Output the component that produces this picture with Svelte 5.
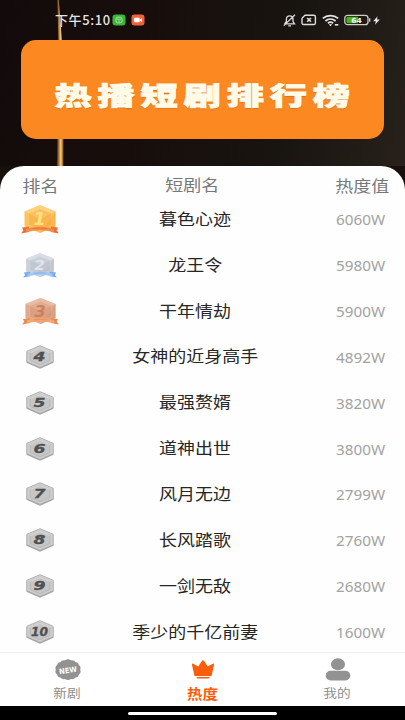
<script lang="ts">
	type Drama = { name: string; heat: string };

	const dramas: Drama[] = [
		{ name: '暮色心迹', heat: '6060W' },
		{ name: '龙王令', heat: '5980W' },
		{ name: '干年情劫', heat: '5900W' },
		{ name: '女神的近身高手', heat: '4892W' },
		{ name: '最强赘婿', heat: '3820W' },
		{ name: '道神出世', heat: '3800W' },
		{ name: '风月无边', heat: '2799W' },
		{ name: '长风踏歌', heat: '2760W' },
		{ name: '一剑无敌', heat: '2680W' },
		{ name: '季少的千亿前妻', heat: '1600W' }
	];

	const medals = [
		{ light: '#ffd98a', mid: '#fcc35c', dark: '#f3a236', ribbon: '#f58a4a', tail: '#ea6f35', text: '#ffe27a' },
		{ light: '#e0e2e8', mid: '#cbcfd8', dark: '#b2b8c6', ribbon: '#a3c8f3', tail: '#78a8e6', text: '#dfe4ee' },
		{ light: '#edc5ad', mid: '#e0a98b', dark: '#d39170', ribbon: '#f3a66e', tail: '#e58b50', text: '#cb8160' }
	];
</script>

<div class="phone">
	<header class="hero">
		<div class="streak"></div>
		<div class="status">
			<span class="time">下午5:10</span>
			<svg class="app-icon" width="14" height="12" viewBox="0 0 14 12">
				<rect x=".5" y=".5" width="13" height="11" rx="3" fill="#3fb43b" />
				<rect x="4" y="3.2" width="6" height="5.6" rx="1.8" fill="none" stroke="#a8e59a" />
				<path d="M5 5.2h4M6 7h2" stroke="#a8e59a" stroke-width=".8" />
			</svg>
			<svg class="rec-icon" width="14" height="12" viewBox="0 0 14 12">
				<rect x=".5" y=".5" width="13" height="11" rx="3" fill="#f1623b" />
				<rect x="3" y="3.8" width="5.7" height="4.5" rx="1" fill="#fff" />
				<path d="M8.8 5.7 11 4v4L8.8 6.5z" fill="#fff" />
			</svg>
			<div class="indicators">
				<svg width="13" height="13" viewBox="0 0 13 13" fill="none" stroke="#ddd" stroke-width="1.3">
					<path d="M1.5 9.8h10L10 7.6V5C10 3 8.7 1.8 6.7 1.8S3.4 3 3.4 5v2.5L1.5 9.8M5.3 11.8h2.8M.8 11.6 12 .8" />
				</svg>
				<svg width="16" height="12" viewBox="0 0 16 12" fill="none" stroke="#ddd" stroke-width="1.4">
					<path d="M4 1.3h8.8q1.6 0 1.6 1.6v6q0 1.6-1.6 1.6H2.6Q1 10.5 1 8.900V4.2z" />
					<path d="m6.2 4 3.8 3.8M10 4 6.2 7.8" stroke-width="1.6" />
				</svg>
				<svg width="17" height="13" viewBox="0 0 17 13" fill="none" stroke="#e4e4e4" stroke-width="1.7">
					<path d="M.8 4.4c4.200-3.700 11.200-3.700 15.400 0M3.400 7c3-2.500 7.200-2.500 10.200 0M5.900 9.200c1.600-1.200 3.600-1.200 5.200 0" />
					<path d="m6.900 10.400 1.600 1.800 1.600-1.800q-1.600-1-3.200 0z" fill="#e4e4e4" stroke="none" />
					<path d="M12.8 10.8h3.500" stroke-width="1.6" />
				</svg>
				<svg class="battery" width="27" height="12" viewBox="0 0 27 12">
					<rect x=".8" y="1.3" width="23.2" height="9.4" rx="2.8" fill="none" stroke="#ccc" stroke-width="1.3" />
					<path d="M4.200 2.700h9.800v6.600H4.200q-1.800 0-1.800-1.800v-3q0-1.800 1.800-1.800z" fill="#4fb01e" />
					<path d="M25.7 4.300v3.400" stroke="#ccc" stroke-width="1.3" />
					<text x="12.4" y="8.700" text-anchor="middle" textLength="10.500" lengthAdjust="spacingAndGlyphs">64</text>
				</svg>
				<svg width="7" height="9" viewBox="0 0 7 9"><path d="M4.5.3.2 5.200h2.700L2 8.700l4.800-5.200H4z" fill="#e4e4e4" /></svg>
			</div>
		</div>
		<div class="banner"><h1>热播短剧排行榜</h1></div>
	</header>

	<main class="sheet">
		<div class="row head">
			<span class="rank"><span class="wide">排名</span></span>
			<span class="name"><span class="wide">短剧名</span></span>
			<span class="heat"><span class="wide">热度值</span></span>
		</div>
		{#each dramas as drama, i}
			<div class="row">
				<div class="rank">
					{#if i < 3}
						{@const m = medals[i]}
						<svg class="medal" class:silver={i === 1} class:bronze={i === 2} viewBox="0 0 38 29" preserveAspectRatio="none">
							<path d="M19 0 34.5 6.500v15L19 28 3.500 21.500v-15z" fill={m.mid} />
							<path d="M19 0 34.5 6.500 19 14 3.500 6.500z" fill={m.light} opacity=".7" />
							<path d="M34.5 6.500v15L19 28l9-12z" fill={m.dark} opacity=".4" />
							<path d="M19 3.500 30.500 8v12L19 25 7.500 20V8z" fill={m.dark} opacity=".35" stroke={m.light} stroke-width=".8" />
							<text x="18.5" y="20" text-anchor="middle" textLength="12" lengthAdjust="spacingAndGlyphs" fill={m.text} font-size="17">{i + 1}</text>
							<path d="m1 22.500 7-.8v5.200L0 28.500l2.400-2.900zM37 22.500l-7-.8v5.200l8 1.600-2.400-2.900z" fill={m.tail} />
							<path d="M5 24Q19 19.500 33 24v3.200Q19 23.500 5 27.200z" fill={m.ribbon} />
							<path d="M12 23.600q7-1.200 14 0" stroke={m.tail} stroke-width=".8" fill="none" />
						</svg>
					{:else}
						<svg class="hex" width="28" height="24" viewBox="0 0 28 24">
							<path d="M14 .2 27 5.700q.7.300.7 1v10.200q0 .7-.7 1L14 23.700 1 17.900q-.7-.3-.7-1V6.700q0-.7.7-1z" fill="#a6a6a6" />
							<path d="M14 1 26.800 6.300v10.200L14 21.900 1.200 16.500V6.300z" fill="#cdcdcd" />
							<path d="M14 3.500 23.800 7.500v8L14 19.700 4.200 15.500v-8z" fill="#c6c6c6" stroke="#b4b4b4" stroke-width=".8" />
							<path d="M4.200 7.500 14 3.500l9.800 4" fill="none" stroke="#e2e2e2" stroke-width=".8" />
							<text x="13.500" y="16" text-anchor="middle" textLength={i === 9 ? 17 : 12} lengthAdjust="spacingAndGlyphs">{i + 1}</text>
						</svg>
					{/if}
				</div>
				<div class="name"><span class="wide">{drama.name}</span></div>
				<div class="heat"><span class="number">{drama.heat}</span></div>
			</div>
		{/each}
	</main>

	<nav class="tabs">
		<div class="tab">
			<svg width="26" height="22" viewBox="0 0 26 22">
				<path d="M10 1.300q3-2 6 0 3-.6 4.500 1.600 3 .3 3.500 3 2.400 2 1.200 4.600 1.200 3-1.200 4.900-.5 2.800-3.500 3.200-1.500 2-4.500 1.500-3 1.800-6 0-3 .5-4.500-1.500-3-.4-3.500-3.200Q-.4 13.500.8 10.500-.4 7.900 2 5.900q.5-2.700 3.500-3Q7 .7 10 1.300z" fill="#929292" />
				<text x="13" y="14" text-anchor="middle" textLength="18" transform="rotate(-9 13 11)" lengthAdjust="spacingAndGlyphs">NEW</text>
			</svg>
			<span class="label">新剧</span>
		</div>
		<div class="tab active">
			<svg width="24" height="22" viewBox="0 0 24 22" fill="#fa5d0c">
				<path d="M3.500 17 1 6q-.3-2 1.600-1.100L7.300 7.500 10.700 2.300q1.300-2 2.600 0l3.400 5.200 4.700-2.600Q23.300 4 23 6l-2.500 11z" />
				<path d="M5.500 18h13q-.3 1.500-1.500 1.500H7q-1.200 0-1.500-1.500z" />
			</svg>
			<span class="label">热度</span>
		</div>
		<div class="tab">
			<svg width="26" height="24" viewBox="0 0 26 24" fill="#929292">
				<ellipse cx="13" cy="6.200" rx="7" ry="6" />
				<rect x=".7" y="12.800" width="24.600" height="9.700" rx="4.800" />
			</svg>
			<span class="label">我的</span>
		</div>
	</nav>
	<div class="home"><div class="home-line"></div></div>
</div>

<style>
	:global(body) {
		margin: 0;
	}

	.phone {
		width: 405px;
		height: 720px;
		display: flex;
		flex-direction: column;
		overflow: hidden;
		background: #17100c;
		font-family: 'Noto Sans', 'Noto Sans CJK SC', sans-serif;
	}

	.hero {
		position: relative;
		height: 166px;
		flex: none;
		background: linear-gradient(100deg, #130b0b 0%, #170e0c 35%, #181410 70%, #28211b 100%);
	}

	.streak {
		position: absolute;
		top: 0;
		left: 56px;
		width: 8px;
		height: 166px;
		clip-path: polygon(15% 0, 35% 0, 75% 25%, 100% 80%, 95% 100%, 12% 100%, 25% 60%, 30% 25%);
		background: linear-gradient(90deg, transparent, #9b6524 30%, #f3d089 60%, #9b6524 85%, transparent);
	}

	.status {
		position: relative;
		height: 40px;
		box-sizing: border-box;
		padding: 0 26px 0 55px;
		display: flex;
		align-items: center;
	}

	.time {
		width: 57px;
		white-space: nowrap;
		font-family: 'Noto Sans CJK SC', sans-serif;
		font-size: 13px;
		font-weight: 500;
		line-height: 20px;
		letter-spacing: 0.6px;
		color: #e4e4e4;
	}

	.rec-icon {
		margin-left: 5px;
	}

	.indicators {
		margin-left: auto;
		margin-right: -1px;
		display: flex;
		align-items: center;
		gap: 5px;
	}

	.battery {
		margin-right: -3px;
	}

	.battery text {
		font: bold 7px 'DejaVu Sans', sans-serif;
		fill: #fff;
	}

	.banner {
		position: relative;
		height: 99px;
		margin: 0 21px;
		border-radius: 15px;
		background: #fc8822;
		display: flex;
		align-items: center;
		justify-content: center;
	}

	h1 {
		margin: 8px 0 0 5px;
		font-family: 'Noto Sans CJK SC', sans-serif;
		font-weight: 900;
		font-size: 25px;
		line-height: 36px;
		letter-spacing: 3.9px;
		white-space: nowrap;
		color: #fffbe8;
		-webkit-text-stroke: 0.8px #fffbe8;
		text-shadow: 0 1px 1px #b7691f;
		transform: scaleX(1.49);
	}

	.sheet {
		position: relative;
		height: 486px;
		flex: none;
		box-sizing: border-box;
		padding-top: 1px;
		border-radius: 24px 24px 0 0;
		background: #fefefe;
		overflow: hidden;
	}

	.row {
		height: 45.85px;
		display: grid;
		grid-template-columns: 80px 1fr 75px;
		align-items: center;
	}

	.row.head {
		height: 30px;
		padding-top: 4px;
		margin-bottom: -2px;
		box-sizing: border-box;
		margin-top: 1px;
		color: #777;
	}

	.rank {
		display: flex;
		justify-content: center;
		align-items: center;
		padding-top: 1px;
	}

	.head .rank {
		padding: 0 0 0 1px;
	}

	.name {
		text-align: center;
		padding-right: 20px;
		color: #262626;
	}

	.head .name {
		padding-right: 26px;
		color: #777;
	}

	.wide {
		display: inline-block;
		font-family: 'Noto Sans CJK SC', sans-serif;
		font-size: 15.5px;
		line-height: 20px;
		white-space: nowrap;
		transform: scaleX(1.16);
	}

	.head .heat .wide {
		margin-left: 9px;
		position: relative;
		top: 1px;
	}

	.number {
		display: inline-block;
		margin-left: 5.5px;
		padding-top: 3px;
		font-size: 13.5px;
		line-height: 20px;
		color: #a2a2a2;
		transform: scaleX(1.13);
		transform-origin: left;
	}

	.medal {
		width: 38px;
		height: 29px;
	}

	.medal.silver {
		width: 34px;
		height: 25px;
	}

	.medal.bronze {
		width: 37px;
		height: 27px;
	}

	.medal text {
		font-family: 'DejaVu Sans', sans-serif;
		font-weight: bold;
		font-style: italic;
	}

	.hex text {
		font: italic bold 11.5px 'DejaVu Sans', sans-serif;
		fill: #505050;
		stroke: #505050;
		stroke-width: 0.3px;
	}

	.tabs {
		position: relative;
		height: 54px;
		flex: none;
		box-sizing: border-box;
		padding-top: 5px;
		border-top: 1px solid #f0f0f0;
		background: #fff;
		display: grid;
		grid-template-columns: repeat(3, 1fr);
	}

	.tab {
		display: flex;
		flex-direction: column;
		align-items: center;
		color: #8e8e8e;
	}

	.tab svg {
		height: 24px;
	}

	.tab text {
		font: bold 7.5px 'DejaVu Sans', sans-serif;
		fill: #fff;
	}

	.label {
		font-family: 'Noto Sans CJK SC', sans-serif;
		font-size: 12px;
		line-height: 18px;
		margin-top: 2px;
		transform: scaleX(1.14);
	}

	.active .label {
		font-size: 13.5px;
		font-weight: bold;
		color: #fa5d0c;
	}

	.home {
		height: 14px;
		background: #000;
		display: flex;
		align-items: center;
		justify-content: center;
	}

	.home-line {
		width: 149px;
		height: 3px;
		border-radius: 2px;
		background: #fff;
	}
</style>
